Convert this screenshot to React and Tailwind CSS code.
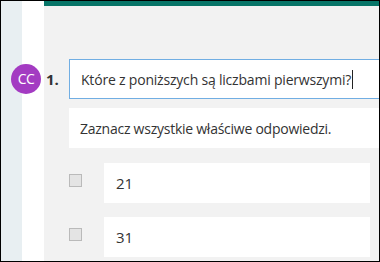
import React from 'react';

const font = { fontFamily: '"Open Sans", "Noto Sans", sans-serif' };

const Answer = ({ label, className }) => (
  <div className={`flex items-start ${className}`}>
    <div className="ml-[68px] mt-[11px] w-[13px] h-[13px] border border-[#bababa] bg-[#e4e4e4]" />
    <div className="ml-[22px] mr-[9px] flex-1 h-[40px] bg-white flex items-center pl-[12px] text-[15px] text-[#333333]">
      {label}
    </div>
  </div>
);

export default function App() {
  return (
    <div className="w-[380px] h-[262px] border border-black overflow-hidden" style={font}>
      <div className="h-full bg-[linear-gradient(to_right,#e8eff2_21px,#ffffff_21px,#ffffff_43px,#f2f2f2_43px)]">
        <div className="ml-[43px] h-[5px] bg-[#077568]" />

        {/* question title */}
        <div className="mt-[53px] flex items-center h-[40px]">
          <div className="ml-[10px] w-[30px] h-[30px] rounded-full bg-[#a33bc2] flex items-center justify-center text-white text-[14px] tracking-[-0.5px] leading-none">
            CC
          </div>
          <div className="ml-[5px] w-[23px] text-[15px] font-bold text-[#333333] leading-none">1.</div>
          <div className="flex-1 h-[40px] border border-r-0 border-[#71aee3] bg-white flex items-center pl-[11px] text-[14px] tracking-[-0.2px] text-[#333333] whitespace-nowrap">
            Które z poniższych są liczbami pierwszymi?
            <span className="inline-block ml-px w-px h-[19px] bg-[#222222]" />
          </div>
        </div>

        <div className="mt-[9px] ml-[68px] h-[40px] bg-white flex items-center pl-[11px] text-[14px] tracking-[-0.25px] text-[#333333]">
          Zaznacz wszystkie właściwe odpowiedzi.
        </div>

        <Answer label="21" className="mt-[15px]" />
        <Answer label="31" className="mt-[14px]" />
      </div>
    </div>
  );
}
